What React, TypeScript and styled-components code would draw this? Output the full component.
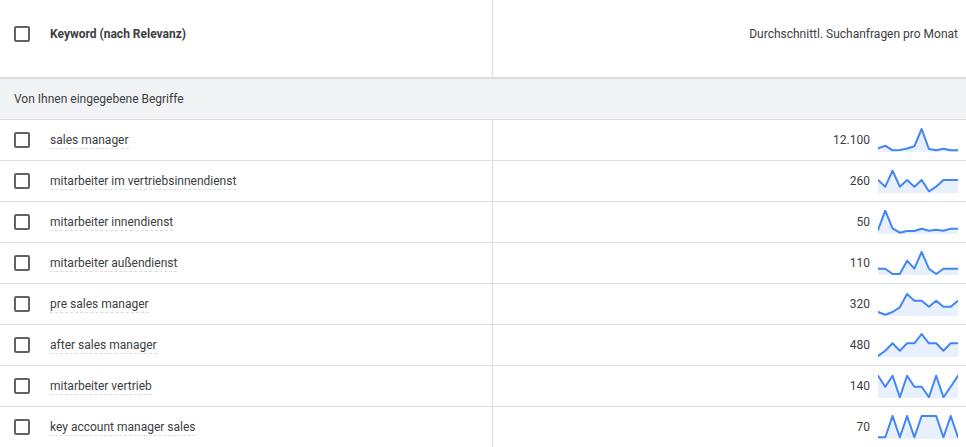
import React from "react";
import styled, { createGlobalStyle } from "styled-components";

const GlobalStyle = createGlobalStyle`
  body {
    margin: 0;
    background: #ffffff;
    font-family: Roboto, "Liberation Sans", Arial, sans-serif;
    color: #3c4043;
  }
`;

const Table = styled.div`
  width: 966px;
  height: 447px;
  overflow: hidden;
  background: #ffffff;
`;

const HeaderRow = styled.div`
  display: grid;
  grid-template-columns: 493px 1fr;
  height: 79px;
  box-sizing: border-box;
  border-bottom: 2px solid #dadce0;
`;

const HeaderCell = styled.div<{ $align?: "left" | "right" }>`
  display: flex;
  align-items: center;
  gap: 20px;
  justify-content: ${(p) => (p.$align === "right" ? "flex-end" : "flex-start")};
  box-sizing: border-box;
  padding: 0 8px 9px 14px;
  border-right: ${(p) => (p.$align === "right" ? "none" : "1px solid #dadce0")};
  font-size: 12px;
  color: #3c4043;
`;

const HeaderTitle = styled.span<{ $bold?: boolean }>`
  font-weight: ${(p) => (p.$bold ? 700 : 400)};
  color: #3c4043;
`;

const GroupRow = styled.div`
  height: 41px;
  box-sizing: border-box;
  border-bottom: 1px solid #dadce0;
  background: #f1f3f4;
  display: flex;
  align-items: center;
  padding-left: 14px;
  font-size: 12px;
  color: #3c4043;
`;

const Row = styled.div`
  display: grid;
  grid-template-columns: 493px 1fr;
  height: 41px;
  box-sizing: border-box;
  border-bottom: 1px solid #e0e0e0;
`;

const KeywordCell = styled.div`
  display: flex;
  align-items: center;
  gap: 20px;
  padding-left: 14px;
  border-right: 1px solid #dadce0;
  font-size: 12px;
`;

const Checkbox = styled.span`
  width: 16px;
  height: 16px;
  box-sizing: border-box;
  border: 2px solid #5f6368;
  border-radius: 2px;
  flex: none;
`;

const Keyword = styled.span`
  color: #3c4043;
  border-bottom: 1px dashed #dadce0;
  line-height: 15px;
  margin-top: 2px;
`;

const VolumeCell = styled.div`
  display: flex;
  align-items: center;
  justify-content: flex-end;
  gap: 8px;
  padding-right: 8px;
  font-size: 12px;
  color: #3c4043;
`;

const Spark = styled.svg`
  width: 80px;
  height: 24px;
  display: block;
  flex: none;
`;

type Item = { keyword: string; volume: string; trend: number[] };

const rows: Item[] = [
  {
    keyword: "sales manager",
    volume: "12.100",
    trend: [20.3, 17.7, 22.3, 22, 20.5, 18.3, 1, 21, 22.3, 20.7, 22.3, 22.3],
  },
  {
    keyword: "mitarbeiter im vertriebsinnendienst",
    volume: "260",
    trend: [11, 17.7, 1.7, 17.7, 11, 17.7, 11, 22.3, 17.7, 11, 11, 11],
  },
  {
    keyword: "mitarbeiter innendienst",
    volume: "50",
    trend: [20, 0.7, 18.3, 22.7, 21, 21, 18.7, 20.7, 19.7, 20.7, 18.7, 18.7],
  },
  {
    keyword: "mitarbeiter außendienst",
    volume: "110",
    trend: [17.7, 17.7, 23, 23, 9.7, 17.7, 1, 17.7, 23, 17.7, 17.7, 17.7],
  },
  {
    keyword: "pre sales manager",
    volume: "320",
    trend: [20, 22.7, 20, 15.3, 2, 8.7, 8.7, 14.7, 8.7, 14.7, 14.7, 8.7],
  },
  {
    keyword: "after sales manager",
    volume: "480",
    trend: [23, 17.7, 10.3, 17.7, 10.3, 10.3, 1, 10.3, 10.3, 17.7, 10.3, 10.3],
  },
  {
    keyword: "mitarbeiter vertrieb",
    volume: "140",
    trend: [1.7, 12.7, 1.7, 23.3, 1.7, 12.7, 12.7, 23.3, 1.7, 23.3, 12.7, 1.7],
  },
  {
    keyword: "key account manager sales",
    volume: "70",
    trend: [22.3, 22.3, 1, 22.3, 1, 22.3, 1, 1, 1, 22.3, 1, 22.3],
  },
];

const Sparkline = ({ values }: { values: number[] }) => {
  const step = 80 / (values.length - 1);
  const line = values.map((v, i) => `${(i * step).toFixed(2)},${v}`).join(" ");
  const area = `0,24 ${line} 80,24`;
  return (
    <Spark viewBox="0 0 80 24" preserveAspectRatio="none">
      <polygon points={area} fill="#e8f0fe" />
      <polyline
        points={line}
        fill="none"
        stroke="#4285f4"
        strokeWidth="2"
        strokeLinejoin="round"
        strokeLinecap="round"
      />
    </Spark>
  );
};

const App = () => {
  return (
    <Table>
      <GlobalStyle />
      <HeaderRow>
        <HeaderCell>
          <Checkbox />
          <HeaderTitle $bold>Keyword (nach Relevanz)</HeaderTitle>
        </HeaderCell>
        <HeaderCell $align="right">
          <HeaderTitle>Durchschnittl. Suchanfragen pro Monat</HeaderTitle>
        </HeaderCell>
      </HeaderRow>
      <GroupRow>Von Ihnen eingegebene Begriffe</GroupRow>
      {rows.map((r) => (
        <Row key={r.keyword}>
          <KeywordCell>
            <Checkbox />
            <Keyword>{r.keyword}</Keyword>
          </KeywordCell>
          <VolumeCell>
            <span>{r.volume}</span>
            <Sparkline values={r.trend} />
          </VolumeCell>
        </Row>
      ))}
    </Table>
  );
};

export default App;
